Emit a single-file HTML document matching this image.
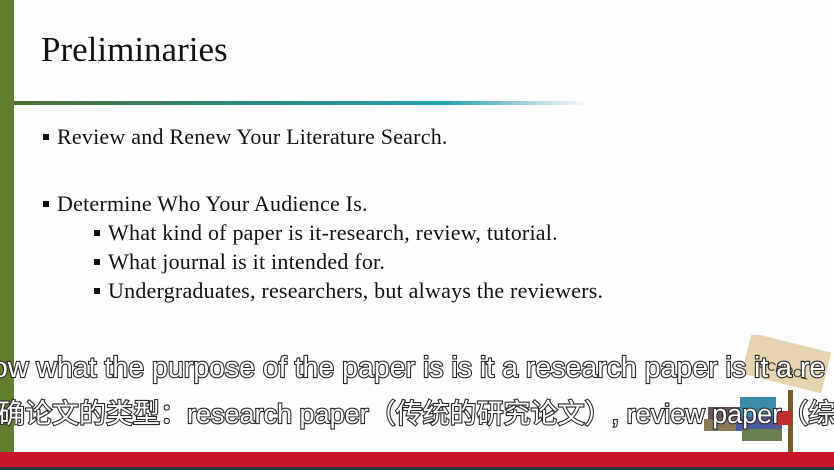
<!DOCTYPE html><html><head><meta charset="utf-8"><style>
body{margin:0;width:834px;height:470px;overflow:hidden;background:#fdfdfd;position:relative;font-family:"Liberation Serif",serif;color:#111}
.g{position:absolute;left:0;top:0;width:14px;height:452px;background:#5f7f2e}
.r{position:absolute;left:0;top:452px;width:834px;height:15px;background:#c8182a}
.b{position:absolute;left:0;top:467px;width:834px;height:3px;background:#334}
.line{position:absolute;left:14px;top:101px;width:575px;height:4px;background:linear-gradient(90deg,#4f6e2e,#2a8a80 40%,#2aa0b0 75%,rgba(255,255,255,0))}
.t{position:absolute;left:41px;top:30px;font-size:35px}
.p{position:absolute;font-size:22px;white-space:nowrap;letter-spacing:0.22px}
.p:before{content:"";position:absolute;left:-14px;top:10px;width:6px;height:6px;background:#111}
.s{position:absolute;white-space:nowrap;font-family:"Liberation Sans","Noto Sans CJK SC",sans-serif;color:#fff;-webkit-text-stroke:2.2px #2a2a2a;paint-order:stroke fill}
</style></head><body>
<div class="g"></div><div class="line"></div>
<div class="t">Preliminaries</div>
<div class="p" style="left:57px;top:124px">Review and Renew Your Literature Search.</div>
<div class="p" style="left:57px;top:191px">Determine Who Your Audience Is.</div>
<div class="p" style="left:108px;top:220px">What kind of paper is it-research, review, tutorial.</div>
<div class="p" style="left:108px;top:249px">What journal is it intended for.</div>
<div class="p" style="left:108px;top:278px">Undergraduates, researchers, but always the reviewers.</div>
<svg style="position:absolute;left:660px;top:335px" width="174" height="117">
<g transform="rotate(14 130 30)"><rect x="85" y="8" width="82" height="42" fill="#e6d4b0"/>
<text x="100" y="40" font-size="12" fill="#333" font-family="Liberation Sans">SCHOOL</text></g>
<rect x="128" y="55" width="5" height="62" fill="#7a5a2a"/>
<rect x="48" y="72" width="40" height="14" fill="#6a5060"/><rect x="44" y="84" width="40" height="12" fill="#8a7a5a"/>
<rect x="80" y="62" width="36" height="24" fill="#3a8aaa"/><rect x="76" y="82" width="46" height="14" fill="#4a5aa0"/>
<rect x="82" y="94" width="40" height="12" fill="#6a8050"/><rect x="114" y="76" width="18" height="14" fill="#c03030"/>
</svg>
<div class="s" style="left:-8px;top:352px;font-size:28.5px">ow what the purpose of the paper is is it a research paper is it a re</div>
<div class="s" style="left:-2px;top:392px;font-size:27px">确论文的类型：research paper（传统的研究论文）, review paper（综</div>
<div class="r"></div><div class="b"></div>
</body></html>
